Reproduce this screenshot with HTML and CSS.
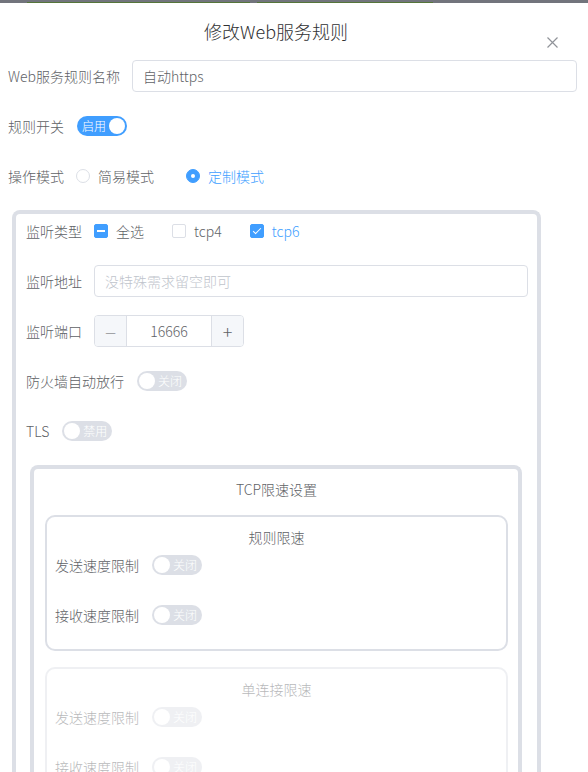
FILE: index.html
```html
<!DOCTYPE html>
<html lang="zh-CN">
<head>
    <meta charset="UTF-8">
    <meta name="viewport" content="width=device-width, initial-scale=1.0">
    <title>修改Web服务规则</title>
    <link rel="stylesheet" href="styles.css">
</head>
<body>
    <div class="topbar">
        <span class="seg seg-a"></span>
        <span class="seg seg-b"></span>
    </div>

    <div class="dialog">
        <div class="dialog-header">
            <h2 class="dialog-title">修改Web服务规则</h2>
            <button class="close-btn" aria-label="关闭">
                <svg width="11" height="11" viewBox="0 0 11 11">
                    <path d="M0.5 0.5 L10.5 10.5 M10.5 0.5 L0.5 10.5" stroke="#909399" stroke-width="1.2" fill="none"/>
                </svg>
            </button>
        </div>

        <form class="form">
            <div class="form-item">
                <label class="form-label">Web服务规则名称</label>
                <input class="text-input" type="text" value="自动https">
            </div>

            <div class="form-item">
                <label class="form-label">规则开关</label>
                <span class="switch on"><span class="switch-text">启用</span><span class="knob"></span></span>
            </div>

            <div class="form-item">
                <label class="form-label">操作模式</label>
                <span class="radio"><span class="radio-dot"></span>简易模式</span>
                <span class="radio checked"><span class="radio-dot"></span>定制模式</span>
            </div>

            <div class="group-box">
                <div class="form-item">
                    <label class="form-label">监听类型</label>
                    <span class="checkbox"><span class="check-box indeterminate"></span>全选</span>
                    <span class="checkbox"><span class="check-box"></span>tcp4</span>
                    <span class="checkbox checked"><span class="check-box"></span>tcp6</span>
                </div>

                <div class="form-item">
                    <label class="form-label">监听地址</label>
                    <input class="text-input" type="text" placeholder="没特殊需求留空即可">
                </div>

                <div class="form-item">
                    <label class="form-label">监听端口</label>
                    <div class="number-input">
                        <span class="num-btn minus">—</span>
                        <span class="num-value">16666</span>
                        <span class="num-btn plus">+</span>
                    </div>
                </div>

                <div class="form-item">
                    <label class="form-label">防火墙自动放行</label>
                    <span class="switch"><span class="knob"></span><span class="switch-text">关闭</span></span>
                </div>

                <div class="form-item">
                    <label class="form-label">TLS</label>
                    <span class="switch"><span class="knob"></span><span class="switch-text">禁用</span></span>
                </div>

                <div class="limit-box">
                    <div class="box-title">TCP限速设置</div>

                    <div class="sub-box">
                        <div class="box-title">规则限速</div>
                        <div class="form-item">
                            <label class="form-label">发送速度限制</label>
                            <span class="switch"><span class="knob"></span><span class="switch-text">关闭</span></span>
                        </div>
                        <div class="form-item">
                            <label class="form-label">接收速度限制</label>
                            <span class="switch"><span class="knob"></span><span class="switch-text">关闭</span></span>
                        </div>
                    </div>

                    <div class="sub-box disabled">
                        <div class="box-title">单连接限速</div>
                        <div class="form-item">
                            <label class="form-label">发送速度限制</label>
                            <span class="switch"><span class="knob"></span><span class="switch-text">关闭</span></span>
                        </div>
                        <div class="form-item">
                            <label class="form-label">接收速度限制</label>
                            <span class="switch"><span class="knob"></span><span class="switch-text">关闭</span></span>
                        </div>
                    </div>
                </div>
            </div>
        </form>
    </div>
</body>
</html>
```

FILE: styles.css
```css
html, body {
    height: 100%;
    overflow: hidden;
}

body {
    margin: 0;
    background-color: #fff;
    font-family: "Noto Sans CJK SC", "Noto Sans", sans-serif;
    font-size: 14px;
    font-weight: 300;
    color: #606266;
}

.topbar {
    height: 3px;
    background-color: #72747c;
    display: flex;
    align-items: flex-end;
    padding-left: 27px;
    gap: 7px;
}

.seg {
    height: 1px;
    background-color: #55753a;
}

.seg-a {
    width: 223px;
}

.seg-b {
    width: 176px;
}

.dialog {
    position: relative;
}

.dialog-header {
    padding: 16px 36px 0 0;
    margin-bottom: 17px;
}

.dialog-title {
    margin: 0;
    text-align: center;
    font-size: 18px;
    line-height: 24px;
    font-weight: 300;
    color: #303133;
}

.close-btn {
    position: absolute;
    top: 33px;
    right: 30px;
    border: none;
    background: none;
    padding: 0;
    width: 11px;
    height: 11px;
    cursor: pointer;
}

.form {
    padding: 0 11px 0 8px;
}

.form-item {
    display: flex;
    align-items: center;
    height: 32px;
    margin-bottom: 18px;
}

.form-label {
    padding-right: 12px;
    line-height: 32px;
    white-space: nowrap;
    color: #606266;
}

.text-input {
    flex: 1;
    height: 32px;
    box-sizing: border-box;
    border: 1px solid #dcdfe6;
    border-radius: 4px;
    padding: 0 10px;
    font-family: inherit;
    font-size: 14px;
    font-weight: 300;
    color: #606266;
    outline: none;
}

.text-input::placeholder {
    color: #c0c4cc;
}

/* 开关 */
.switch {
    display: inline-flex;
    align-items: center;
    width: 50px;
    height: 20px;
    box-sizing: border-box;
    border-radius: 10px;
    background-color: #dcdfe6;
    padding: 0 2px;
    gap: 3px;
    margin-left: 1px;
}

.switch.on {
    background-color: #409eff;
    padding-left: 5px;
}

.switch-text {
    font-size: 12px;
    line-height: 20px;
    color: #fff;
}

.knob {
    width: 16px;
    height: 16px;
    border-radius: 50%;
    background-color: #fff;
    flex-shrink: 0;
}

.switch.on .knob {
    margin-left: auto;
}

/* 单选 */
.radio {
    display: inline-flex;
    align-items: center;
    margin-right: 32px;
    color: #606266;
}

.radio-dot {
    width: 14px;
    height: 14px;
    box-sizing: border-box;
    border: 1px solid #dcdfe6;
    border-radius: 50%;
    margin-right: 8px;
    display: flex;
    align-items: center;
    justify-content: center;
}

.radio.checked {
    color: #409eff;
}

.radio.checked .radio-dot {
    background-color: #409eff;
    border-color: #409eff;
}

.radio.checked .radio-dot::after {
    content: "";
    width: 4px;
    height: 4px;
    border-radius: 50%;
    background-color: #fff;
}

/* 多选 */
.checkbox {
    display: inline-flex;
    align-items: center;
    margin-right: 28px;
    color: #606266;
}

.check-box {
    position: relative;
    width: 14px;
    height: 14px;
    box-sizing: border-box;
    border: 1px solid #dcdfe6;
    border-radius: 2px;
    margin-right: 8px;
}

.check-box.indeterminate {
    background-color: #409eff;
    border-color: #409eff;
}

.check-box.indeterminate::after {
    content: "";
    position: absolute;
    left: 2px;
    right: 2px;
    top: 5px;
    height: 2px;
    background-color: #fff;
}

.checkbox.checked {
    color: #409eff;
}

.checkbox.checked .check-box {
    background-color: #409eff;
    border-color: #409eff;
}

.checkbox.checked .check-box::after {
    content: "";
    position: absolute;
    left: 4px;
    top: 1px;
    width: 3px;
    height: 7px;
    border: 1px solid #fff;
    border-top: none;
    border-left: none;
    transform: rotate(45deg);
}

/* 数字输入 */
.number-input {
    display: flex;
    width: 150px;
    height: 32px;
    box-sizing: border-box;
    border: 1px solid #dcdfe6;
    border-radius: 4px;
    overflow: hidden;
}

.num-btn {
    width: 31px;
    display: flex;
    align-items: center;
    justify-content: center;
    background-color: #f5f7fa;
    color: #606266;
    font-size: 16px;
}

.num-btn.minus {
    border-right: 1px solid #dcdfe6;
    font-size: 12px;
}

.num-btn.plus {
    border-left: 1px solid #dcdfe6;
    font-size: 18px;
}

.num-value {
    flex: 1;
    text-align: center;
    line-height: 30px;
    color: #606266;
}

/* 分组框 */
.group-box {
    margin-left: 4px;
    margin-right: 36px;
    border: 4px solid #dcdfe6;
    border-bottom: none;
    border-radius: 8px 8px 0 0;
    padding: 1px 9px 0 10px;
    height: 900px;
}

.limit-box {
    margin: 0 6px 0 4px;
    border: 4px solid #dcdfe6;
    border-bottom: none;
    border-radius: 8px 8px 0 0;
    padding: 10px 10px 0 11px;
    height: 600px;
}

.box-title {
    text-align: center;
    line-height: 20px;
    color: #606266;
    margin-bottom: 16px;
}

.sub-box {
    border: 2px solid #dcdfe6;
    border-radius: 10px;
    padding: 10px 8px 0 8px;
    margin-bottom: 16px;
}

.sub-box .box-title {
    margin-bottom: 2px;
}

.sub-box.disabled {
    opacity: 0.45;
}
```
